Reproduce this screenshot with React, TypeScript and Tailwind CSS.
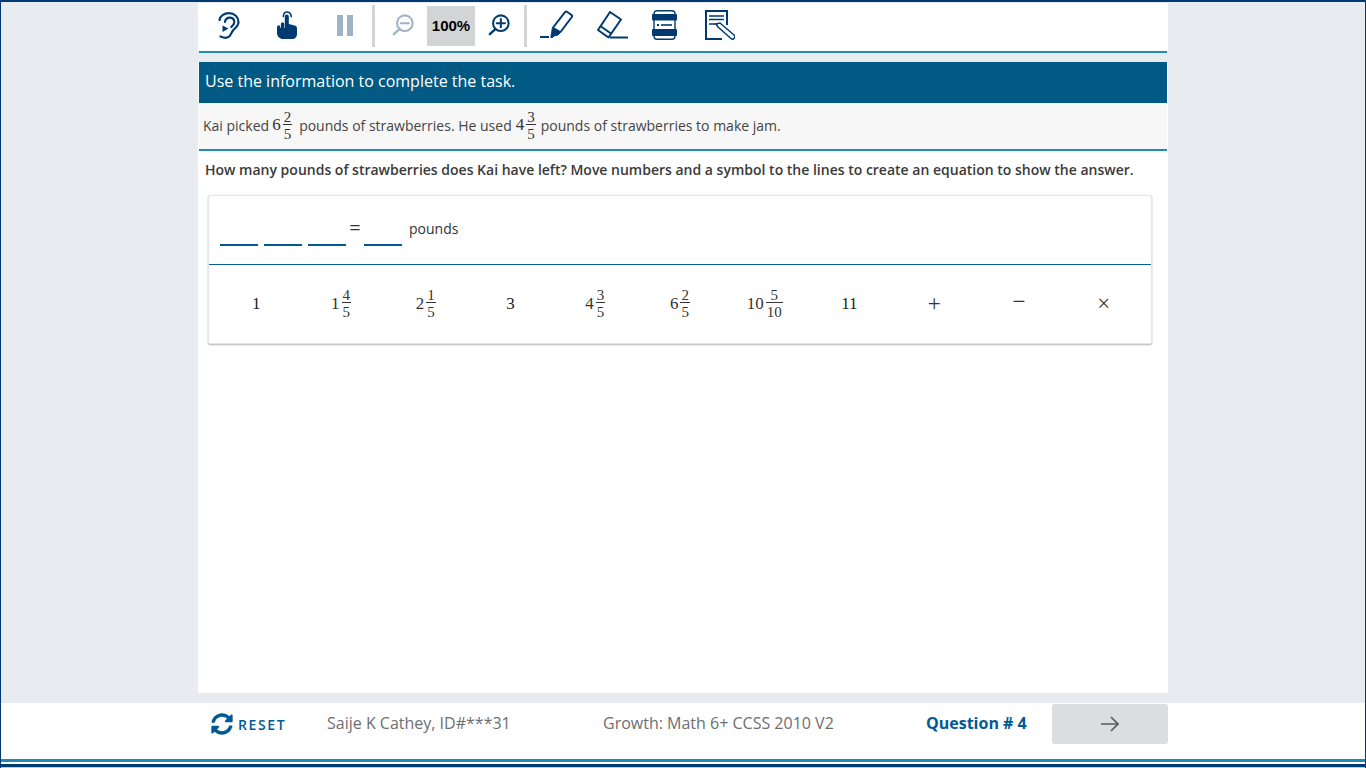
import React from "react";

const navy = "#003a70";

function Frac({ whole, num, den }: { whole: string; num: string; den: string }) {
  return (
    <span className="inline-flex items-center font-['Liberation_Serif',serif] text-[#333]">
      <span className="text-[17px] mr-[2px]">{whole}</span>
      <span className="inline-flex flex-col items-center text-[15px] mt-[2px]">
        <span className="px-[1px] leading-[13px]">{num}</span>
        <span className="border-t border-[#333] px-[1px] pt-[2px] w-full text-center leading-[15px]">{den}</span>
      </span>
    </span>
  );
}

function Ear() {
  return (
    <svg width="22" height="27" viewBox="0 0 22 27" fill="none" stroke={navy} strokeWidth="2.200" strokeLinecap="round">
      <path d="M1.500 8C2 4 6 1.200 11 1.200c5.500 0 9.500 4 9.500 8.800 0 4-3.500 6-5.500 8.500-1.500 2-2 4-3.500 5.800-2 2-5.500 1.700-9 .2" />
      <path d="M7 10c0-2.500 2.300-4.500 5-4.300 2.500.2 4.300 2 4.300 4.500 0 2-1.500 3.500-3 4.800" />
      <path d="M4.500 13.500l6 3-6 3.500z" fill={navy} stroke="none" />
    </svg>
  );
}

function Hand() {
  return (
    <svg width="20" height="28" viewBox="0 0 20 28" fill={navy}>
      <path d="M0 16a1.600 1.600 0 0 1 3.300 0v1h.6v-4a1.600 1.600 0 0 1 3.300 0v4h.6V5.500a2 2 0 0 1 4 0V13l6 1.500c1.500.4 2.200 1.500 2.200 3V23c0 3-2 5-5 5H6c-3 0-6-2.500-6-6z" />
      <path d="M6.300 5.500C6.500 2.800 8 1 10 1s3.800 1.800 4.300 4.500" fill="none" stroke={navy} strokeWidth="1.600" strokeLinecap="round" />
    </svg>
  );
}

function Pause() {
  return (
    <div className="flex gap-[4px]">
      <div className="w-[6px] h-[21px] bg-[#9fb3c8]" />
      <div className="w-[6px] h-[21px] bg-[#9fb3c8]" />
    </div>
  );
}

function Zoom({ plus, color }: { plus?: boolean; color: string }) {
  return (
    <svg width="22" height="22" viewBox="0 0 24 24" fill="none" stroke={color} strokeWidth="2.200" strokeLinecap="round">
      <circle cx="14" cy="10" r="8.500" />
      <path d="M8 16.500l-6 5.500" strokeWidth="2.600" />
      <path d="M9.500 10h9" />
      {plus && <path d="M14 5.500v9" />}
    </svg>
  );
}

function Highlighter() {
  return (
    <svg width="33" height="30" viewBox="0 0 33 30" fill="none" stroke={navy} strokeWidth="2">
      <path d="M0 27h9" />
      <path d="M10.500 27h2" />
      <path d="M13.500 17L25 2.200q1-1 2-.4l4.500 3.200q1 .8.300 2L20.500 22" />
      <path d="M12.500 17l8.500 5-3 3-4 1-2 1.500-1-1.500.5-2.500z" fill={navy} strokeWidth="1" />
    </svg>
  );
}

function Eraser() {
  return (
    <svg width="31" height="28" viewBox="0 0 31 28" fill="none" stroke={navy} strokeWidth="2" strokeLinejoin="round">
      <path d="M13 1l11 7.500-12.500 18L1 19z" />
      <path d="M4 15.500l10 7" />
      <path d="M13 26.500h18" />
    </svg>
  );
}

function Calculator() {
  return (
    <svg width="25" height="30" viewBox="0 0 25 30" fill="none">
      <rect x="2" y="0.700" width="21" height="28.600" rx="3" stroke={navy} strokeWidth="1.400" />
      <rect x="0" y="4" width="25" height="6.500" rx="1" fill={navy} />
      <rect x="0" y="19" width="25" height="7" rx="1" fill={navy} />
      <rect x="5" y="14" width="2" height="2" fill={navy} />
      <rect x="9" y="14.200" width="11" height="1.600" fill={navy} />
    </svg>
  );
}

function Notes() {
  return (
    <svg width="30" height="30" viewBox="0 0 30 30" fill="none" stroke={navy} strokeWidth="2">
      <path d="M22 15V1H1v28h16" />
      <path d="M4 6h15M4 9.500h15M4 14h8" strokeWidth="1.500" />
      <path d="M11 14l4-1 14 12a2 2 0 0 1-3 3.500L13 17z" fill="#fff" strokeWidth="1.500" />
    </svg>
  );
}

function Refresh() {
  return (
    <svg width="22" height="22" viewBox="0 0 512 512" fill="#005a96">
      <path d="M370.700 133.300C339.500 104 298.900 88 255.800 88c-77.500.1-144.300 53.200-162.800 126.900-1.300 5.400-6.100 9.100-11.700 9.100H24.100c-7.500 0-13.200-6.800-11.800-14.200C33.900 94.900 134.800 8 256 8c66.400 0 126.800 26.100 171.300 68.700L463 41C478.100 25.900 504 36.600 504 57.900V192c0 13.300-10.700 24-24 24H345.900c-21.400 0-32.100-25.900-17-41l41.800-41.700zM32 296h134.100c21.400 0 32.100 25.900 17 41l-41.800 41.800c31.300 29.300 71.800 45.300 114.900 45.200 77.400-.1 144.300-53.100 162.800-126.800 1.300-5.400 6.100-9.100 11.700-9.100h57.300c7.500 0 13.200 6.800 11.800 14.200C478.100 417.100 377.200 504 256 504c-66.400 0-126.800-26.100-171.300-68.700L49 471C33.900 486.100 8 475.400 8 454.100V320c0-13.300 10.700-24 24-24z" />
    </svg>
  );
}

const tiles: React.ReactNode[] = [
  "1",
  <Frac whole="1" num="4" den="5" />,
  <Frac whole="2" num="1" den="5" />,
  "3",
  <Frac whole="4" num="3" den="5" />,
  <Frac whole="6" num="2" den="5" />,
  <Frac whole="10" num="5" den="10" />,
  "11",
  <span className="text-[23px] leading-none text-[#333]">+</span>,
  <span className="text-[23px] leading-none text-[#333] relative top-[-2px]">−</span>,
  <span className="text-[23px] leading-none text-[#333]">×</span>,
];

export default function App() {
  return (
    <div className="w-[1366px] h-[768px] overflow-hidden flex flex-col bg-[#e8ebef] border-x border-[#003a70] border-t-2 font-['Open_Sans',sans-serif]">
      <div className="w-[970px] ml-[197px] flex-1 flex flex-col">
        {/* Toolbar */}
        <div className="bg-white mt-px h-[48px] pb-[4px] flex items-center shrink-0">
          <div className="w-[62px] flex justify-center"><Ear /></div>
          <div className="w-[54px] flex justify-center"><Hand /></div>
          <div className="w-[58px] flex justify-center pl-[3px]"><Pause /></div>
          <div className="w-[3px] h-[42px] mt-[2px] bg-[#d3d4d6]" />
          <div className="w-[52px] flex justify-center pl-[4px]"><Zoom color="#9fb3c8" /></div>
          <div className="w-[48px] h-[40px] mt-[2px] bg-[#d3d4d6] flex items-center justify-center text-[15px] font-bold text-black font-['Liberation_Sans',sans-serif]">100%</div>
          <div className="w-[48px] flex justify-center"><Zoom plus color={navy} /></div>
          <div className="w-[3px] h-[42px] mt-[2px] bg-[#d3d4d6] ml-[1px]" />
          <div className="w-[58px] flex justify-center"><Highlighter /></div>
          <div className="w-[55px] flex justify-center"><Eraser /></div>
          <div className="w-[49px] flex justify-center"><Calculator /></div>
          <div className="w-[62px] flex justify-center"><Notes /></div>
        </div>
        <div className="h-[2px] bg-[#1e8bba] mx-px shrink-0" />
        <div className="h-[9px] shrink-0" />

        {/* Content */}
        <div className="flex-1 bg-white flex flex-col">
          <div className="mx-px h-[41px] bg-[#005a84] text-white text-[16px] flex items-center px-[6px] pb-[3px] shrink-0">
            Use the information to complete the task.
          </div>
          <div className="mx-px h-[48px] bg-[#f7f7f7] border-b-2 border-[#1e8bba] flex items-center px-[4px] pb-[2px] text-[14px] text-[#444] shrink-0">
            <span className="mr-[3px]">Kai picked</span>
            <Frac whole="6" num="2" den="5" />
            <span className="ml-[7px] mr-[4px]">pounds of strawberries. He used</span>
            <Frac whole="4" num="3" den="5" />
            <span className="ml-[5px]">pounds of strawberries to make jam.</span>
          </div>
          <div className="mt-[9px] ml-[7px] text-[14px] font-semibold text-[#3a3a3a] leading-[19px]">
            How many pounds of strawberries does Kai have left? Move numbers and a symbol to the lines to create an equation to show the answer.
          </div>

          {/* Equation card */}
          <div className="mt-[16px] ml-[10px] w-[944px] h-[149px] bg-white border border-[#e5e5e5] rounded-[2px] shadow-[0_1px_2px_rgba(0,0,0,0.3)] flex flex-col">
            <div className="h-[69px] border-b border-[#0a5c9a] flex items-start pl-[11px] pt-[21px] text-[14px] text-[#333] shrink-0">
              <div className="w-[38px] h-[29px] border-b-2 border-[#005a96]" />
              <div className="w-[38px] h-[29px] border-b-2 border-[#005a96] ml-[6px]" />
              <div className="w-[38px] h-[29px] border-b-2 border-[#005a96] ml-[6px]" />
              <div className="w-[18px] text-center text-[20px] leading-[22px]">=</div>
              <div className="w-[38px] h-[29px] border-b-2 border-[#005a96]" />
              <div className="ml-[7px] leading-[24px]">pounds</div>
            </div>
            <div className="flex-1 grid grid-cols-11 px-[5px] items-center font-['Liberation_Serif',serif] text-[17px] text-[#222] pb-[1px]">
              {tiles.map((t, i) => (
                <div key={i} className="flex justify-center">{t}</div>
              ))}
            </div>
          </div>
        </div>
      </div>

      {/* Footer */}
      <div className="mt-[10px] h-[56px] pt-px bg-white flex items-start shrink-0 text-[16px] text-[#6d6e71]">
        <div className="ml-[210px] h-[40px] flex items-center w-[116px]">
          <Refresh />
          <span className="ml-[5px] text-[14px] font-semibold tracking-[1.600px] text-[#005a96]">RESET</span>
        </div>
        <div className="w-[276px] h-[38px] flex items-center">Saije K Cathey, ID#***31</div>
        <div className="w-[323px] h-[38px] flex items-center">Growth: Math 6+ CCSS 2010 V2</div>
        <div className="w-[126px] h-[38px] flex items-center font-bold text-[#005a96]">Question # 4</div>
        <div className="w-[116px] h-[40px] bg-[#dcdddf] rounded-[3px] flex items-center justify-center">
          <svg width="20" height="18" viewBox="0 0 20 18" fill="none" stroke="#58595b" strokeWidth="1.700">
            <path d="M1 9h17M11 2l7 7-7 7" />
          </svg>
        </div>
      </div>
      <div className="h-[3px] bg-[#1e8bba] shrink-0" />
      <div className="h-[2px] bg-white shrink-0" />
      <div className="h-[3px] bg-[#003a70] shrink-0" />
      <div className="h-px bg-[#ccc] shrink-0" />
    </div>
  );
}
